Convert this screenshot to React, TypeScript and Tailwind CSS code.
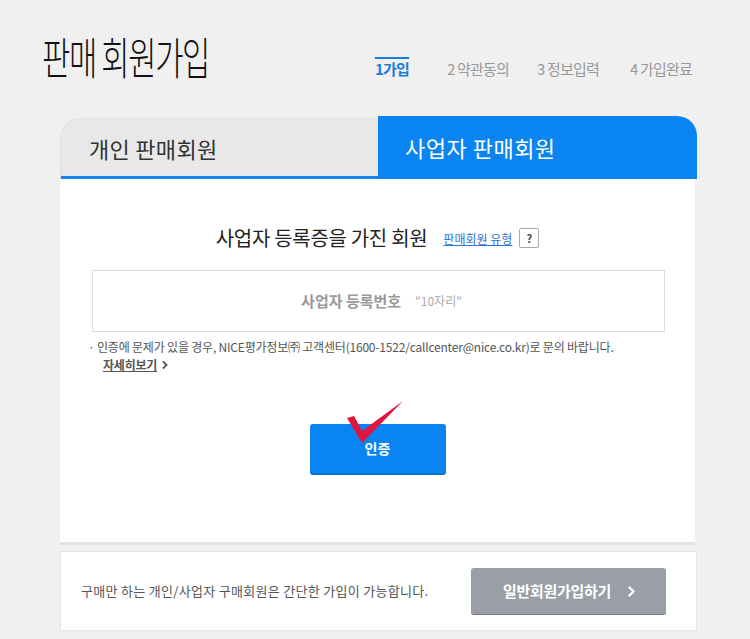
import React from "react";

const F = { fontFamily: '"Noto Sans CJK KR", "Noto Sans", sans-serif' };

function Chevron({ size, className }: { size: number; className?: string }) {
  return (
    <svg className={className} width={size} height={size} viewBox="0 0 10 10" fill="none">
      <path d="M3.5 2 L6.5 5 L3.5 8" stroke="currentColor" strokeWidth="1.8" strokeLinecap="square" />
    </svg>
  );
}

export default function App() {
  return (
    <div className="w-[750px] h-[639px] bg-[#f0f0f0] overflow-hidden" style={F}>
      <div className="w-[637px] ml-[60px]">
        {/* Header */}
        <div className="flex items-start h-[116px]">
          <div className="w-[333px] ml-[-18px] mt-[34px]">
            <h1 className="text-[44px] leading-none font-extralight text-[#111] tracking-[-2px] scale-x-[0.7] origin-left whitespace-nowrap">
              판매 회원가입
            </h1>
          </div>
          <div className="flex items-start mt-[61px] text-[15px] leading-none tracking-[-0.8px] text-[#999] whitespace-nowrap">
            <span className="w-[72px]">
              <span className="relative inline-block font-bold text-[#1a7de0]">
                <span className="absolute left-0 right-0 top-[-4px] h-[2px] bg-[#1a7de0]" />
                1가입
              </span>
            </span>
            <span className="w-[90px]">2 약관동의</span>
            <span className="w-[93px]">3 정보입력</span>
            <span>4 가입완료</span>
          </div>
        </div>

        {/* Tabs */}
        <div className="flex h-[63px] items-end">
          <div className="w-[318px] h-[61px] bg-[#e8e8e8] rounded-tl-[20px] border-t border-l border-[#e2e2e2] flex flex-col">
            <div className="flex-1 flex items-center pl-[28px]">
              <span className="text-[22px] text-[#333] tracking-[0.3px] mt-[2px]">개인 판매회원</span>
            </div>
            <div className="h-[1px] bg-[#d6e6f6]" />
            <div className="h-[3px] bg-[#1a84ee]" />
          </div>
          <div className="flex-1 h-[63px] bg-[#0a84f2] rounded-tr-[20px] flex items-center pl-[27px]">
            <span className="text-[22px] text-white tracking-[0.5px]">사업자 판매회원</span>
          </div>
        </div>

        {/* Panel */}
        <div className="bg-white h-[366px] border-b-[3px] border-[#e2e2e2] w-[635px]">
          <div className="flex items-center justify-center pt-[44px] gap-[10px]">
            <span className="text-[20px] text-[#222] tracking-[-0.3px]">사업자 등록증을 가진 회원</span>
            <span className="text-[12px] text-[#2a74d8] underline ml-[6px] mt-[2px]">판매회원 유형</span>
            <span className="w-[20px] h-[20px] border border-[#aaa] rounded-[2px] text-[11px] font-bold text-[#444] flex items-center justify-center ml-[-3px]">?</span>
          </div>
          <div className="ml-[32px] mr-[30px] mt-[17px] h-[62px] border border-[#ddd] flex items-center justify-center gap-[14px]">
            <span className="text-[15px] font-bold text-[#999] ml-[6px]">사업자 등록번호</span>
            <span className="text-[12px] text-[#aaa]">"10자리"</span>
          </div>
          <div className="ml-[28px] mt-[6px] text-[12px] text-[#555] leading-[18px] tracking-[-0.2px] whitespace-nowrap">
            <div>· 인증에 문제가 있을 경우, NICE평가정보㈜ 고객센터(1600-1522/callcenter@nice.co.kr)로 문의 바랍니다.</div>
            <div className="ml-[15px] font-bold text-[#555] flex items-center gap-[3px]">
              <span className="underline">자세히보기</span>
              <Chevron size={10} />
            </div>
          </div>
          <div className="flex justify-center mt-[50px] relative">
            <button className="w-[136px] h-[49px] bg-[#0a84f2] rounded-[3px] text-white text-[14px] font-bold shadow-[0_2px_0_#0b6fd0]">
              인증
            </button>
            <svg className="absolute left-[285px] top-[-25px]" width="60" height="50" viewBox="0 0 60 50">
              <path d="M2 19 L9 17 L17 32 L58 2 L17 44 Z" fill="#e0143c" />
            </svg>
          </div>
        </div>

        {/* Bottom box */}
        <div className="mt-[6px] bg-white border border-[#e6e6e6] h-[80px] flex items-center pl-[20px] pr-[30px]">
          <span className="text-[13px] text-[#555] tracking-[0.3px] whitespace-nowrap">구매만 하는 개인/사업자 구매회원은 간단한 가입이 가능합니다.</span>
          <button className="ml-auto w-[195px] h-[46px] bg-[#9a9ea6] rounded-[3px] text-white text-[15px] font-bold shadow-[0_1px_0_#777] flex items-center justify-center gap-[14px] tracking-[-0.3px] pl-[4px]">
            일반회원가입하기 <Chevron size={13} />
          </button>
        </div>
      </div>
    </div>
  );
}
